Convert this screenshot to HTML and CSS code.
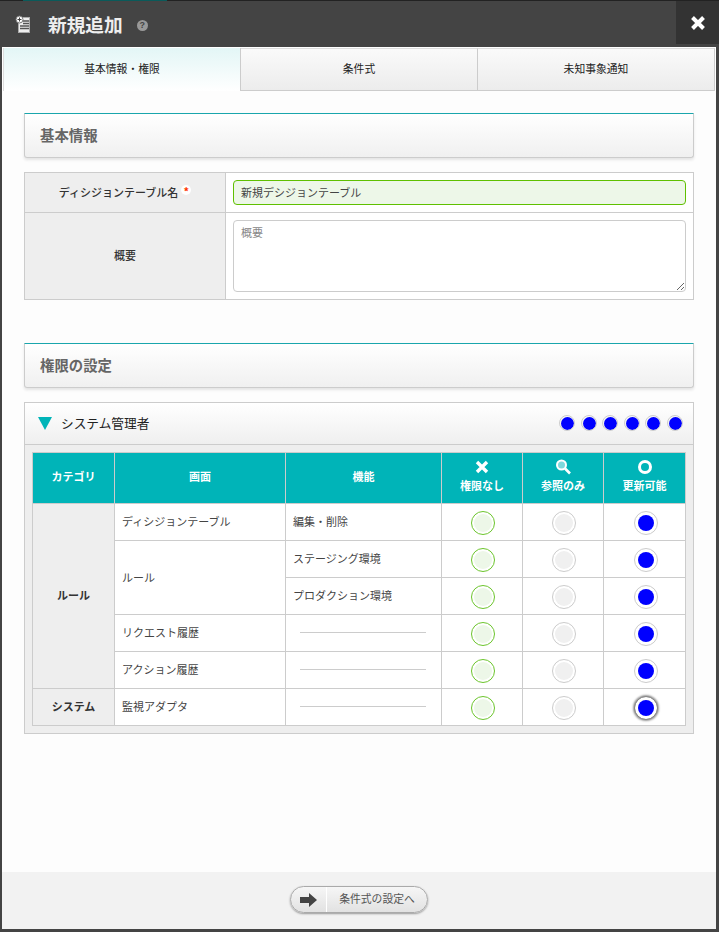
FILE: index.html
```html
<!DOCTYPE html>
<html lang="ja">
<head>
    <meta charset="utf-8">
    <title>新規追加</title>
    <link rel="stylesheet" href="styles.css">
</head>
<body>
<div class="dialog">
    <div class="topline"></div>
    <header class="head">
        <svg class="head-icon" width="16" height="18" viewBox="0 0 16 18">
            <rect x="3.500" y="2.500" width="11" height="15" fill="#eee" stroke="#aaa"/>
            <path d="M8 6h6M8 8.500h6M5 11h9M5 13.500h9" stroke="#555" stroke-width="1.300"/>
            <circle cx="4.500" cy="4.500" r="3.500" fill="#fff" stroke="#777"/>
            <path d="M2.500 4.500h4M4.500 2.500v4" stroke="#444"/>
        </svg>
        <h1 class="head-title">新規追加</h1>
        <span class="head-help">?</span>
        <span class="head-close">
            <svg width="16" height="16" viewBox="0 0 16 16"><path d="M2.500 2.500l11 11M13.500 2.500l-11 11" stroke="#fff" stroke-width="4"/></svg>
        </span>
    </header>

    <div class="body">
        <nav class="tabs">
            <a class="tab tab-on">基本情報・権限</a>
            <a class="tab">条件式</a>
            <a class="tab">未知事象通知</a>
        </nav>

        <main class="content">
            <h2 class="section">基本情報</h2>
            <table class="form">
                <tr class="form-name">
                    <th>ディシジョンテーブル名<span class="req">*</span></th>
                    <td><input class="input-ok" type="text" value="新規デシジョンテーブル"></td>
                </tr>
                <tr class="form-desc">
                    <th>概要</th>
                    <td><textarea class="area" placeholder="概要"></textarea></td>
                </tr>
            </table>

            <h2 class="section section-2">権限の設定</h2>
            <section class="acc">
                <div class="acc-head">
                    <span class="tri"></span>
                    <span class="acc-title">システム管理者</span>
                    <span class="dots">
                        <i class="dot"></i><i class="dot"></i><i class="dot"></i><i class="dot"></i><i class="dot"></i><i class="dot"></i>
                    </span>
                </div>
                <div class="acc-body">
                    <table class="perm">
                        <colgroup>
                            <col class="c1"><col class="c2"><col class="c3"><col class="c4"><col class="c5"><col class="c6">
                        </colgroup>
                        <thead>
                        <tr>
                            <th>カテゴリ</th>
                            <th>画面</th>
                            <th>機能</th>
                            <th>
                                <svg class="th-icon" width="16" height="16" viewBox="0 0 16 16"><path d="M3 3l10 10M13 3L3 13" stroke="#fff" stroke-width="3.400"/></svg>
                                権限なし
                            </th>
                            <th>
                                <svg class="th-icon" width="16" height="16" viewBox="0 0 16 16"><circle cx="6.500" cy="6" r="4.500" fill="#7fd9dc" stroke="#fff" stroke-width="2"/><path d="M10 9.500l5 5" stroke="#fff" stroke-width="2.600"/></svg>
                                参照のみ
                            </th>
                            <th>
                                <svg class="th-icon" width="16" height="16" viewBox="0 0 16 16"><circle cx="8" cy="8" r="5.500" fill="none" stroke="#fff" stroke-width="3"/></svg>
                                更新可能
                            </th>
                        </tr>
                        </thead>
                        <tbody>
                        <tr>
                            <th class="cat" rowspan="5">ルール</th>
                            <td>ディシジョンテーブル</td>
                            <td>編集・削除</td>
                            <td class="mid"><i class="rd rd-none"></i></td>
                            <td class="mid"><i class="rd rd-view"></i></td>
                            <td class="mid"><i class="rd rd-edit"></i></td>
                        </tr>
                        <tr>
                            <td rowspan="2">ルール</td>
                            <td>ステージング環境</td>
                            <td class="mid"><i class="rd rd-none"></i></td>
                            <td class="mid"><i class="rd rd-view"></i></td>
                            <td class="mid"><i class="rd rd-edit"></i></td>
                        </tr>
                        <tr>
                            <td>プロダクション環境</td>
                            <td class="mid"><i class="rd rd-none"></i></td>
                            <td class="mid"><i class="rd rd-view"></i></td>
                            <td class="mid"><i class="rd rd-edit"></i></td>
                        </tr>
                        <tr>
                            <td>リクエスト履歴</td>
                            <td><div class="rule"></div></td>
                            <td class="mid"><i class="rd rd-none"></i></td>
                            <td class="mid"><i class="rd rd-view"></i></td>
                            <td class="mid"><i class="rd rd-edit"></i></td>
                        </tr>
                        <tr>
                            <td>アクション履歴</td>
                            <td><div class="rule"></div></td>
                            <td class="mid"><i class="rd rd-none"></i></td>
                            <td class="mid"><i class="rd rd-view"></i></td>
                            <td class="mid"><i class="rd rd-edit"></i></td>
                        </tr>
                        <tr>
                            <th class="cat">システム</th>
                            <td>監視アダプタ</td>
                            <td><div class="rule"></div></td>
                            <td class="mid"><i class="rd rd-none"></i></td>
                            <td class="mid"><i class="rd rd-view"></i></td>
                            <td class="mid"><i class="rd rd-edit rd-focus"></i></td>
                        </tr>
                        </tbody>
                    </table>
                </div>
            </section>
        </main>

        <footer class="foot">
            <button class="next" type="button">
                <span class="next-icon">
                    <svg width="18" height="14" viewBox="0 0 18 14"><path d="M0 4h9V0l8 7-8 7v-4H0z" fill="#444"/></svg>
                </span>
                <span class="next-label">条件式の設定へ</span>
            </button>
        </footer>
    </div>
</div>
</body>
</html>
```

FILE: styles.css
```css
* {box-sizing:border-box;}
html,body {margin:0;padding:0;}
body {font-family:"Noto Sans CJK JP","Noto Sans",sans-serif;font-size:11px;color:#333;background:#3c3c3c;}

.dialog {position:relative;width:719px;height:932px;display:flex;flex-direction:column;background:#444;border-top:1px solid #222;}
.topline {position:absolute;left:23px;top:-1px;width:144px;height:1px;background:#0a5a5a;}

.head {height:46px;flex:none;display:flex;align-items:flex-start;padding-left:15px;background:#444;}
.head-icon {margin-top:14px;}
.head-title {margin:11px 0 0 17px;font-size:18.7px;line-height:24px;font-weight:700;color:#eee;}
.head-help {width:11px;height:11px;margin:19px 0 0 14px;border-radius:50%;background:#999;color:#444;font-size:9px;line-height:11px;font-weight:700;text-align:center;font-family:"Liberation Sans",sans-serif;}
.head-close {margin-left:auto;width:43px;height:43px;background:#333;display:flex;align-items:center;justify-content:center;}

.body {flex:1;margin:0 3px 3px 2px;display:flex;flex-direction:column;background:#fdfdfd;min-height:0;}

.tabs {display:flex;height:44px;flex:none;background:#fff;padding:1px 1px 0 1px;}
.tab {flex:1;display:flex;align-items:center;justify-content:center;padding-bottom:3px;font-size:10.8px;color:#222;background:linear-gradient(#fafafa,#ececec);border:1px solid #ccc;border-top-color:#ddd;border-left-width:0;}
.tab:first-child {border-left-width:1px;}
.tab-on {background:linear-gradient(#e3f6f6,#fff);border-bottom:none;border-top:none;border-left-color:#ddd;}

.content {flex:1;padding:22px 22px 0 22px;min-height:0;}

.section {margin:0;height:45px;padding-left:15px;font-size:14.4px;line-height:41px;font-weight:700;color:#666;background:linear-gradient(#fff,#f0f0f0);border:1px solid #ccc;border-top-color:#1aa6ad;border-radius:0 0 3px 3px;box-shadow:0 2px 3px #e4e4e4;}
.section-2 {margin-top:43px;}

.form {width:670px;margin-top:14px;border-collapse:collapse;table-layout:fixed;background:#fff;}
.form th,.form td {border:1px solid #ccc;padding:0;}
.form th {width:201px;padding-bottom:2px;background:#eee;font-weight:500;color:#333;}
.form td {padding:0 7px;}
.form-name {height:40px;}
.form-desc {height:87px;}
.req {display:inline-block;width:10px;height:10px;margin-left:3px;border-radius:50%;background:#fff;color:#f30;font-weight:700;line-height:12px;vertical-align:1px;}
.input-ok {display:block;width:100%;height:25px;padding:0 7px 2px;font:inherit;color:#444;background:#edf7e8;border:1px solid #5fc000;border-radius:4px;outline:none;}
.area {display:block;width:100%;height:72px;padding:3px 7px;font:inherit;background:#fff;border:1px solid #ccc;border-radius:4px;outline:none;}
.area::placeholder {color:#888;opacity:1;}

.acc {width:670px;margin-top:14px;border:1px solid #ccc;background:#eee;}
.acc-head {height:42px;display:flex;align-items:center;padding:0 10px 2px 13px;background:linear-gradient(#fff,#efefef);border-bottom:1px solid #ccc;}
.tri {width:0;height:0;border-left:7px solid transparent;border-right:7px solid transparent;border-top:13px solid #00b4b8;margin-top:2px;}
.acc-title {margin-left:9px;font-size:12.7px;color:#222;}
.dots {margin-left:auto;display:flex;gap:5.6px;}
.dot {display:block;width:16px;height:16px;padding:0.5px;border-radius:50%;background:#00f content-box;border:1px solid #ccc;}
.acc-body {padding:7px;}

.perm {width:653px;border-collapse:collapse;table-layout:fixed;background:#fff;}
.perm th,.perm td {border:1px solid #ccc;padding:0 7px 2px;height:37px;}
.perm td {color:#444;}
.perm thead th {height:51px;padding-bottom:4px;background:#00b4b8;color:#fff;font-weight:700;text-align:center;line-height:15px;}
.c1 {width:82px;}
.c2 {width:171px;}
.c3 {width:156px;}
.c4,.c5 {width:81px;}
.c6 {width:82px;}
.th-icon {display:block;margin:0 auto 3px;}
.perm .cat {padding-bottom:3px;background:#eee;color:#333;font-weight:700;text-align:center;}
.perm .mid {padding:1px 6px 0 8px;text-align:center;}
.rule {height:1px;margin:0 8px 0 7px;background:#ccc;}

.rd {display:block;width:24px;height:24px;margin:0 auto;padding:2px;border-radius:50%;border:1px solid #ccc;background:#f0f0f0 content-box;}
.rd-none {background-color:#edf7e8;border-color:#6cc52c;}
.rd-edit {padding:3px;background-color:#00f;}
.rd-focus {border-color:#888;box-shadow:0 0 2px 1px #999;}

.foot {height:57px;flex:none;display:flex;justify-content:center;padding-top:14px;background:#f2f2f2;}
.next {width:138px;height:27px;padding:0;display:flex;font:inherit;color:#555;background:linear-gradient(#f6f6f6,#e2e2e2);border:1px solid #aaa;border-radius:14px;box-shadow:0 1px 2px #999;}
.next-icon {width:36px;height:100%;display:flex;align-items:center;justify-content:center;border-right:1px solid #fff;}
.next-label {flex:1;line-height:22px;font-size:10.8px;text-align:center;}
```
